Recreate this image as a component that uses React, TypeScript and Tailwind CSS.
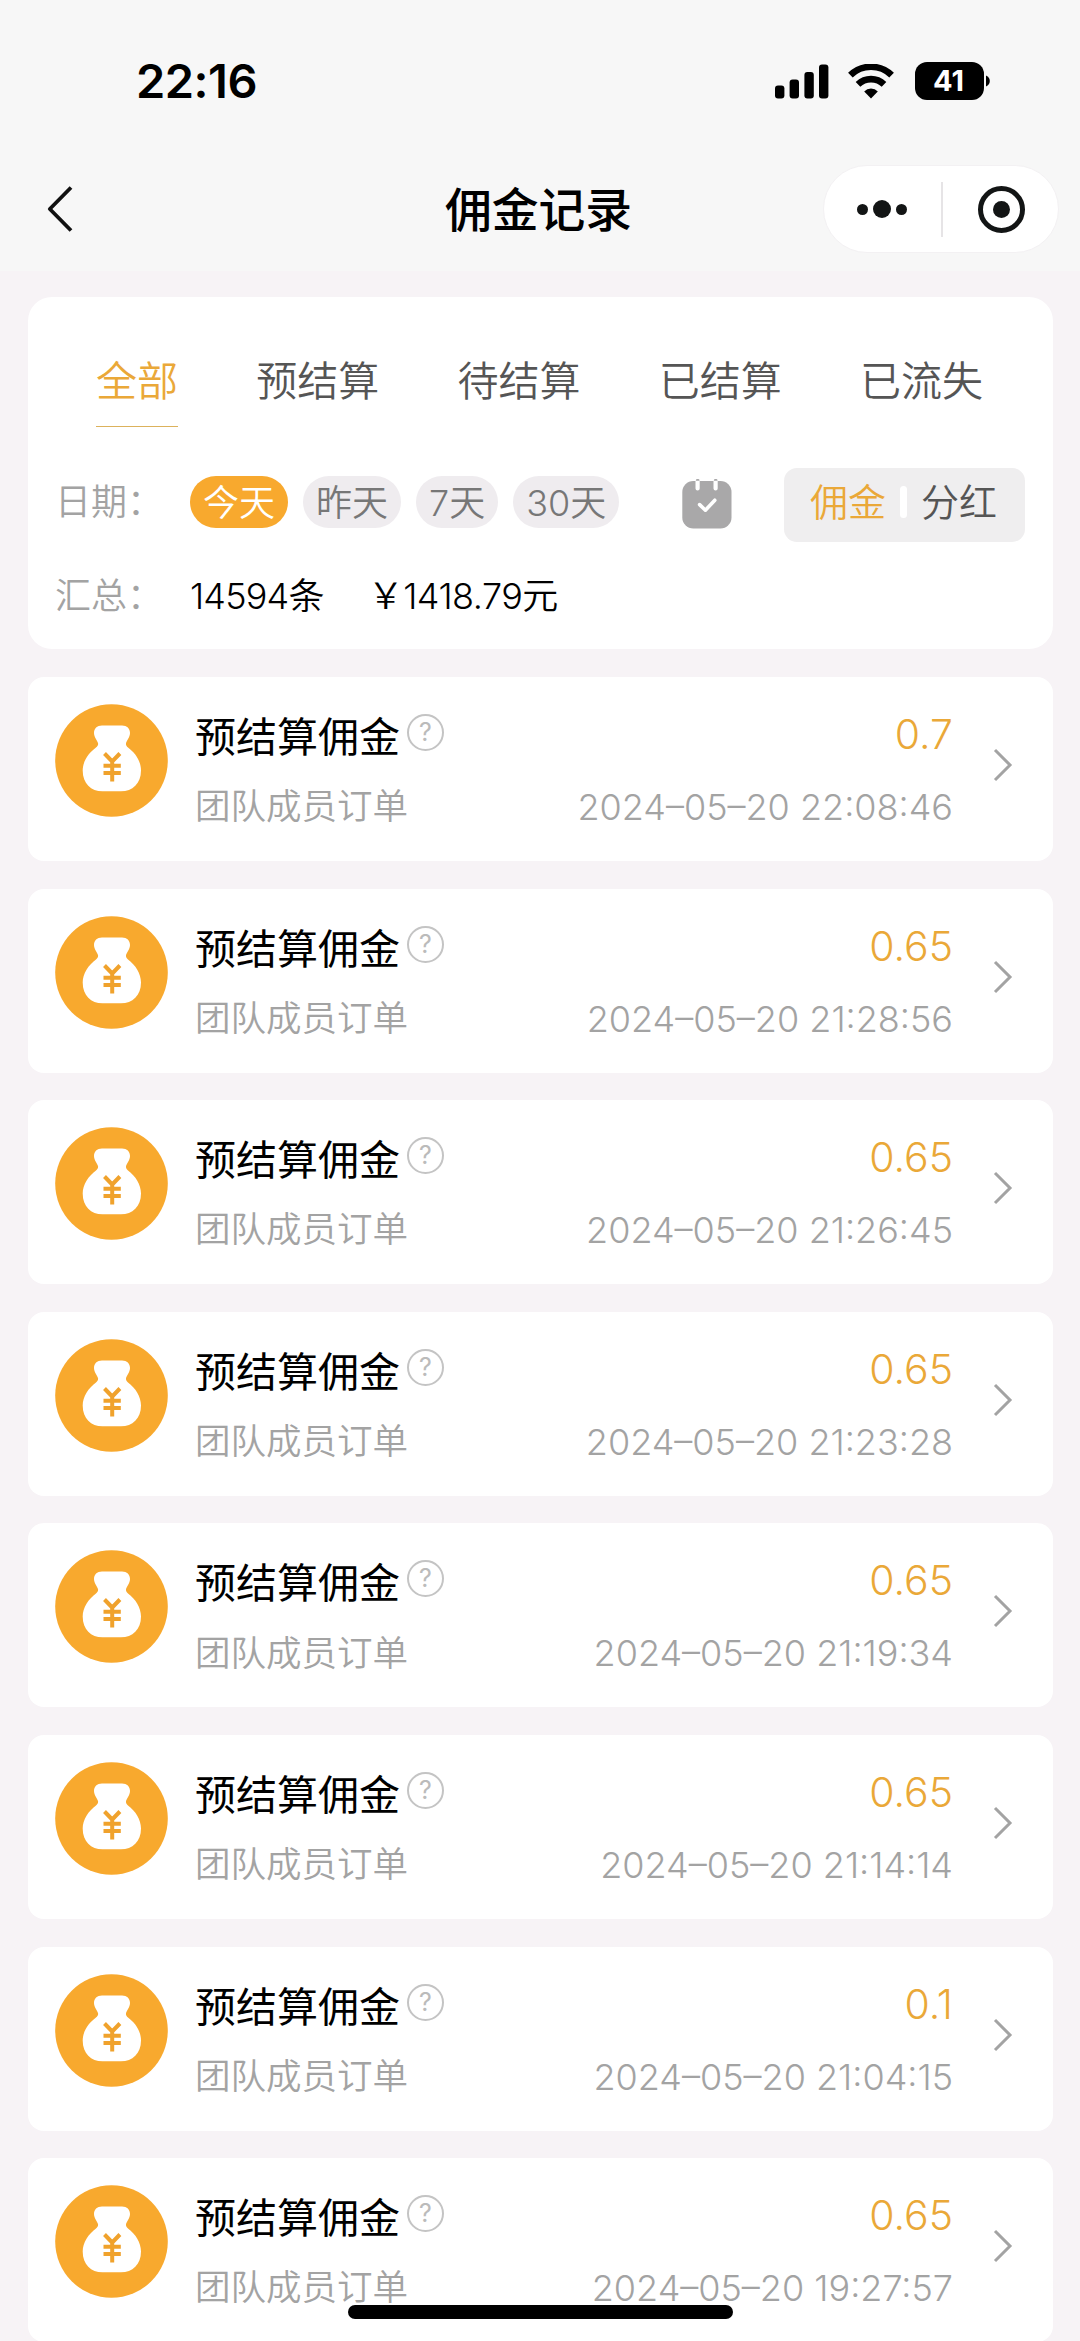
import { ReactNode } from "react";

const tabs = ["全部", "预结算", "待结算", "已结算", "已流失"];
const days = ["今天", "昨天", "7天", "30天"];

const records = [
  { amount: "0.7", time: "2024–05–20 22:08:46" },
  { amount: "0.65", time: "2024–05–20 21:28:56" },
  { amount: "0.65", time: "2024–05–20 21:26:45" },
  { amount: "0.65", time: "2024–05–20 21:23:28" },
  { amount: "0.65", time: "2024–05–20 21:19:34" },
  { amount: "0.65", time: "2024–05–20 21:14:14" },
  { amount: "0.1", time: "2024–05–20 21:04:15" },
  { amount: "0.65", time: "2024–05–20 19:27:57" },
];

const StatusBar = () => (
  <div className="flex h-[162px] items-center justify-between pl-[136px] pr-[90px]">
    <span className="pb-[2px] text-[47px] leading-none font-semibold tracking-[-0.5px]">22:16</span>
    <div className="flex items-center">
      <svg width="54" height="35" viewBox="0 0 54 35">
        <rect x="0" y="21.5" width="9.4" height="13" rx="3" />
        <rect x="14.6" y="15.5" width="9.4" height="19" rx="3" />
        <rect x="29.4" y="8" width="9.4" height="26.5" rx="3" />
        <rect x="44" y="0.5" width="9.4" height="34" rx="3" />
      </svg>
      <svg width="46" height="35" viewBox="0 0 46 35" className="ml-[19px]">
        <g fill="none" stroke="#000" strokeWidth="6.6">
          <path d="M2.4 11.2a29.5 29.5 0 0 1 41.2 0" />
          <path d="M10 20.4a18.6 18.6 0 0 1 26 0" />
        </g>
        <path d="M16.2 27.4a9.7 9.7 0 0 1 13.6 0L23 34.6z" />
      </svg>
      <div className="ml-[21px] flex h-[38px] w-[69px] items-center justify-center rounded-[12px] bg-black pr-[2px] pb-[1px] text-[29px] leading-none font-bold text-white">
        41
      </div>
      <svg width="4" height="12" viewBox="0 0 4 12" className="ml-[2px]">
        <path d="M0 0.5C2.4 1.6 3.8 3.6 3.8 6S2.4 10.4 0 11.5z" />
      </svg>
    </div>
  </div>
);

const NavBar = () => (
  <div className="grid h-[109px] grid-cols-3 items-start">
    <div className="flex h-[94px] items-center pl-[47px]">
      <svg width="26" height="46" viewBox="0 0 26 46" fill="none" stroke="#111" strokeWidth="3.8">
        <path d="M24 1.5 2.8 23 24 44.5" strokeLinejoin="round" />
      </svg>
    </div>
    <h1 className="flex h-[97px] items-center justify-center pr-[3px] text-[46.8px] leading-none font-medium">
      佣金记录
    </h1>
    <div className="flex h-[94px] items-center justify-end pr-[21px]">
      <div className="flex h-[88px] w-[236px] items-center rounded-full border border-[#f3f1f3] bg-white">
        <div className="flex w-[117px] items-center justify-center gap-[5px] pr-[2px]">
          <i className="size-[11px] rounded-full bg-[#131515]" />
          <i className="size-[18px] rounded-full bg-[#131515]" />
          <i className="size-[11px] rounded-full bg-[#131515]" />
        </div>
        <div className="h-[55px] w-[2px] bg-[#e6e4e6]" />
        <div className="flex flex-1 items-center justify-center pl-[1px]">
          <div className="flex size-[47px] items-center justify-center rounded-full border-[5.5px] border-[#131515]">
            <i className="size-[17px] rounded-full bg-[#131515]" />
          </div>
        </div>
      </div>
    </div>
  </div>
);

const CalendarIcon = () => (
  <svg width="50" height="50" viewBox="0 0 50 50">
    <rect x="0.3" y="2" width="49.2" height="47.5" rx="11" fill="#a9a8a9" />
    <path d="M15.6 1v8.5M33.6 1v8.500" stroke="#fff" strokeWidth="4.2" strokeLinecap="round" />
    <path d="M13.8 1.800a1.900 1.900 0 0 1 3.800 0M31.800 1.800a1.900 1.900 0 0 1 3.800 0" fill="#a9a8a9" />
    <path
      d="m17.600 25.600 5.800 5.600 9.400-10"
      fill="none"
      stroke="#fff"
      strokeWidth="3.6"
      strokeLinecap="round"
      strokeLinejoin="round"
    />
  </svg>
);

const MoneyBag = () => (
  <svg width="113" height="113" viewBox="0 0 113 113" className="shrink-0">
    <circle cx="56.5" cy="56.5" r="56.3" fill="#f8a92e" />
    <path
      fill="#fff"
      d="M47 21.5H67C72 21.5 75 24.5 75 29C75 33.5 71.5 36.5 71 39.5C70.8 41 71.5 42.2 73 43.5C80.5 49 86 57.5 86 66.5C86 79.5 77.5 87.3 66 87.3H47.5C36 87.3 27.700 79.5 27.700 66.5C27.700 57.5 33.5 49 41 43.5C42.5 42.2 43.3 41 43.100 39.5C42.5 36.5 39 33.5 39 29C39 24.5 42 21.5 47 21.5Z"
    />
    <path
      d="M49.500 49.500 57.200 57.500 64.900 49.500M57.200 57.500V77.500M48.500 61.800H65.800M48.500 69H65.800"
      fill="none"
      stroke="#f0a22c"
      strokeWidth="4"
    />
  </svg>
);

const HelpIcon = () => (
  <div className="flex size-[37px] items-center justify-center rounded-full border-[2.5px] border-[#c4c4c4] text-[25px] leading-none font-normal text-[#bbb]">
    ?
  </div>
);

const Label = ({ children }: { children: ReactNode }) => (
  <span className="w-[135px] shrink-0 text-[36px] leading-none text-[#a3a3a3]">{children}</span>
);

const FilterCard = () => (
  <section className="h-[352px] rounded-[24px] bg-white">
    <div className="flex justify-between pl-[68px] pr-[70px] pt-[50px] text-[41px] leading-none">
      {tabs.map((tab, i) => (
        <span
          key={tab}
          className={
            i === 0
              ? "h-[80px] border-b-[1.5px] border-[#dcb25c] pt-[14px] text-[#eaa838]"
              : "h-[80px] pt-[14px] text-[#555]"
          }
        >
          {tab}
        </span>
      ))}
    </div>

    <div className="mt-[41px] flex h-[74px] items-start pl-[27px] pr-[28px]">
      <div className="flex h-[68px] items-center">
        <Label>日期：</Label>
        <div className="flex gap-[15px] text-[36px] leading-none">
          {days.map((day, i) => (
            <span
              key={day}
              className={
                i === 0
                  ? "flex h-[52px] items-center rounded-full bg-[#f8a92e] px-[13px] pt-[1px] text-white"
                  : "flex h-[52px] items-center rounded-full bg-[#efecef] px-[13px] pt-[1px] text-[#777]"
              }
            >
              {day}
            </span>
          ))}
        </div>
      </div>
      <div className="ml-auto flex h-[72px] items-center pr-[52px]">
        <CalendarIcon />
      </div>
      <div className="flex h-[74px] w-[241px] items-center justify-center rounded-[13px] bg-[#efeeef] pr-[2px] pb-[7px] text-[38px] leading-none">
        <span className="text-[#eaa838]">佣金</span>
        <i className="mx-[14px] h-[32px] w-[7px] rounded-full bg-white" />
        <span className="text-[#555]">分红</span>
      </div>
    </div>

    <div className="mt-[36px] flex items-center pl-[27px] text-[36px] leading-none">
      <Label>汇总：</Label>
      <span className="tracking-[-0.8px]">14594条</span>
      <span className="ml-[44px] tracking-[-0.5px]">￥1418.79元</span>
    </div>
  </section>
);

const RecordCard = ({ amount, time }: { amount: string; time: string }) => (
  <li className="flex h-[184px] shrink-0 rounded-[16px] bg-white pl-[27px] pt-[27px]">
    <MoneyBag />
    <div className="ml-[27px] w-[758px]">
      <div className="flex h-[54px] items-start justify-between pt-[10px]">
        <div className="flex items-start">
          <span className="pt-[3px] text-[41px] leading-none font-normal">预结算佣金</span>
          <div className="ml-[7px]">
            <HelpIcon />
          </div>
        </div>
        <span className="text-[41px] leading-none text-[#eaa838]">{amount}</span>
      </div>
      <div className="mt-[31px] flex items-center justify-between leading-none text-[#a3a3a3]">
        <span className="text-[35.5px]">团队成员订单</span>
        <span className="text-[36px] font-light">{time}</span>
      </div>
    </div>
    <svg
      width="20"
      height="34"
      viewBox="0 0 20 34"
      fill="none"
      stroke="#a3a3a3"
      strokeWidth="3"
      className="ml-[40px] mt-[44px]"
    >
      <path d="M2 2 17 17 2 32" />
    </svg>
  </li>
);

export default function App() {
  return (
    <main className="relative h-[2341px] w-[1080px] overflow-hidden bg-[#f7f3f6] font-['Inter','Noto_Sans_CJK_SC',sans-serif] font-[350] text-black">
      <header className="bg-[#f7f7f7]">
        <StatusBar />
        <NavBar />
      </header>
      <div className="pl-[28px] pr-[27px] pt-[26px]">
        <FilterCard />
        <ul className="mt-[28px] flex flex-col gap-[27.6px]">
          {records.map((record) => (
            <RecordCard key={record.time} {...record} />
          ))}
        </ul>
      </div>
      <div className="absolute bottom-[22px] left-[348px] h-[14px] w-[385px] rounded-full bg-black" />
    </main>
  );
}
